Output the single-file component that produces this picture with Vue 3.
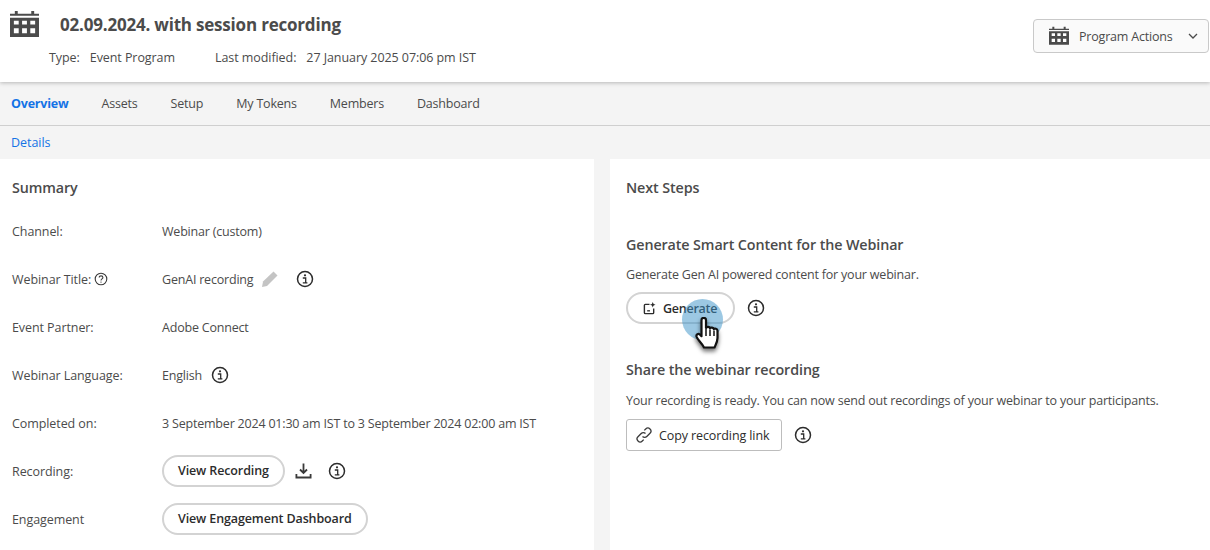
<script setup>
const summary = [
  { label: 'Channel:', value: 'Webinar (custom)' },
  { label: 'Webinar Title:', value: 'GenAI recording', help: true, edit: true, info: true },
  { label: 'Event Partner:', value: 'Adobe Connect' },
  { label: 'Webinar Language:', value: 'English', info: true },
  { label: 'Completed on:', value: '3 September 2024 01:30 am IST to 3 September 2024 02:00 am IST' },
  { label: 'Recording:', button: 'View Recording', download: true, info: true },
  { label: 'Engagement', button: 'View Engagement Dashboard' }
]
const tabs = ['Overview', 'Assets', 'Setup', 'My Tokens', 'Members', 'Dashboard']
</script>

<template>
  <div class="page">
    <header class="top">
      <div class="top-left">
        <div class="title-row">
          <svg class="cal-big" viewBox="0 0 30 30"><path d="M5 1h3v3H5zM22 1h3v3h-3zM0 4h30v2H0zM0 8h30v20H0z" fill="#4b4b4b"/><path d="M4 11h5v4H4zM12.500 11h5v4h-5zM21 11h5v4h-5zM4 19h5v5H4zM12.500 19h5v5h-5zM21 19h5v5h-5z" fill="#fff"/></svg>
          <h1>02.09.2024. with session recording</h1>
        </div>
        <div class="meta">
          <span>Type:</span><span class="meta-val">Event Program</span>
          <span class="meta-gap">Last modified:</span><span class="meta-val">27 January 2025 07:06 pm IST</span>
        </div>
      </div>
      <button class="actions">
        <svg class="cal-small" viewBox="0 0 30 30"><path d="M5 1h3v3H5zM22 1h3v3h-3zM0 4h30v2H0zM0 8h30v20H0z" fill="#4b4b4b"/><path d="M4 11h5v4H4zM12.500 11h5v4h-5zM21 11h5v4h-5zM4 19h5v5H4zM12.500 19h5v5h-5zM21 19h5v5h-5z" fill="#fff"/></svg>
        <span>Program Actions</span>
        <svg class="chev" viewBox="0 0 10 6"><path d="M1 1l4 4 4-4" fill="none" stroke="#4b4b4b" stroke-width="1.300"/></svg>
      </button>
    </header>

    <nav class="tabs">
      <span v-for="t in tabs" :key="t" :class="['tab', { active: t === 'Overview' }]">{{ t }}</span>
    </nav>
    <div class="subnav"><a>Details</a></div>

    <main class="panels">
      <section class="panel left">
        <h2>Summary</h2>
        <div class="row" v-for="r in summary" :key="r.label">
          <div class="label">
            {{ r.label }}
            <svg v-if="r.help" class="help" viewBox="0 0 14 14"><circle cx="7" cy="7" r="5.800" fill="none" stroke="#3a3a3a" stroke-width="1.100"/><path d="M5.200 5.600c0-2.400 3.700-2.300 3.700-.1 0 1.400-1.900 1.300-1.900 2.900" fill="none" stroke="#3a3a3a" stroke-width="1.100"/><circle cx="7" cy="10.100" r=".7" fill="#3a3a3a"/></svg>
          </div>
          <div class="value">
            <button v-if="r.button" class="pill">{{ r.button }}</button>
            <span v-else>{{ r.value }}</span>
            <svg v-if="r.edit" class="pencil" viewBox="0 0 16 16"><path d="M11.500 0.500l4 4L5 15l-5 1 1-5.500z" fill="#c4c4c4"/></svg>
            <svg v-if="r.download" class="download" viewBox="0 0 16 16"><path d="M8 0.500v9M4.500 6.500L8 10l3.500-3.500" fill="none" stroke="#3a3a3a" stroke-width="1.800"/><path d="M.9 11v3.500h14.200V11" fill="none" stroke="#3a3a3a" stroke-width="1.800"/></svg>
            <svg v-if="r.info" class="info" viewBox="0 0 18 18"><circle cx="9" cy="9" r="7.500" fill="none" stroke="#2c2c2c" stroke-width="1.500"/><circle cx="9" cy="5.300" r="1.100" fill="#2c2c2c"/><path d="M6.800 8h2.900v4.600M6.800 12.800h4.600" fill="none" stroke="#2c2c2c" stroke-width="1.300"/></svg>
          </div>
        </div>
      </section>

      <section class="panel right">
        <h2>Next Steps</h2>
        <h3 class="first">Generate Smart Content for the Webinar</h3>
        <p class="p-first">Generate Gen AI powered content for your webinar.</p>
        <div class="action-row gen-row">
          <button class="pill gen">
            <svg class="spark" viewBox="0 0 14 14"><path d="M7 2.500H2.500a1 1 0 0 0-1 1v8a1 1 0 0 0 1 1h8a1 1 0 0 0 1-1V7" fill="none" stroke="#2c2c2c" stroke-width="1.500"/><path d="M10.500 0l.9 2.100 2.100.9-2.100.9-.9 2.100-.9-2.100L7.500 3l2.100-.9z" fill="#2c2c2c"/><path d="M4.500 9.500h3" stroke="#2c2c2c" stroke-width="1.400"/></svg>
            Generate
          </button>
          <svg class="info" viewBox="0 0 18 18"><circle cx="9" cy="9" r="7.500" fill="none" stroke="#2c2c2c" stroke-width="1.500"/><circle cx="9" cy="5.300" r="1.100" fill="#2c2c2c"/><path d="M6.800 8h2.900v4.600M6.800 12.800h4.600" fill="none" stroke="#2c2c2c" stroke-width="1.300"/></svg>
        </div>
        <h3 class="second">Share the webinar recording</h3>
        <p class="p-second">Your recording is ready. You can now send out recordings of your webinar to your participants.</p>
        <div class="action-row copy-row">
          <button class="copy">
            <svg class="link" viewBox="0 0 18 18"><path d="M7.500 10.500a3 3 0 0 0 4.300 0l3.200-3.200a3 3 0 0 0-4.300-4.300L9.300 4.400" fill="none" stroke="#3a3a3a" stroke-width="1.300"/><path d="M10.500 7.500a3 3 0 0 0-4.300 0L3 10.700A3 3 0 0 0 7.300 15l1.400-1.400" fill="none" stroke="#3a3a3a" stroke-width="1.300"/></svg>
            Copy recording link
          </button>
          <svg class="info" viewBox="0 0 18 18"><circle cx="9" cy="9" r="7.500" fill="none" stroke="#2c2c2c" stroke-width="1.500"/><circle cx="9" cy="5.300" r="1.100" fill="#2c2c2c"/><path d="M6.800 8h2.900v4.600M6.800 12.800h4.600" fill="none" stroke="#2c2c2c" stroke-width="1.300"/></svg>
        </div>
      </section>
    </main>

    <!-- mouse highlight and pointer sit over the Generate button -->
    <div class="halo"></div>
    <svg class="hand" viewBox="0 0 28 35">
      <path d="M6.500 3c0-2.800 4.500-2.800 4.500 0v8c.6-1.500 3.600-1.500 4 .3.600-1.200 3.500-1 3.900.9.700-1 3.400-.6 3.600 1.400V21c0 3.500-1.500 6-3 9.500H9C7 26 2.500 23 1.500 19.500c-.5-2 1.800-3.200 3.300-2l1.700 1.700z" fill="#fff" stroke="#111" stroke-width="2.200" stroke-linejoin="round"/>
      <path d="M11 12v7M15 12.500v6.500M19 13.500v5.500" stroke="#111" stroke-width="1.500"/>
    </svg>
  </div>
</template>

<style>
html, body { background: #f4f4f4; }
body { overflow: hidden; }
</style>

<style scoped>
.page {
  position: relative;
  width: 1210px;
  height: 550px;
  overflow: hidden;
  background: #f4f4f4;
  color: #4b4b4b;
  font-family: "Open Sans", sans-serif;
  font-size: 12.5px;
  letter-spacing: -0.2px;
}
.top {
  position: relative;
  height: 82px;
  background: #fff;
  display: flex;
  justify-content: space-between;
  box-shadow: 0 1px 4px rgba(0, 0, 0, 0.25);
  box-sizing: border-box;
}
.top-left { padding: 9px 0 0 10px; }
.title-row { display: flex; align-items: center; height: 30px; }
.cal-big { width: 29px; height: 29px; margin-right: 21px; }
h1 { margin: 0; font-size: 17px; font-weight: 700; color: #4b4b4b; letter-spacing: -0.2px; }
.meta { display: flex; margin: 9px 0 0 39px; line-height: 20px; letter-spacing: -0.07px; }
.meta-val { margin-left: 10px; }
.meta-gap { margin-left: 40px; }
.actions {
  display: flex;
  align-items: center;
  width: 176px;
  height: 34px;
  margin: 19px 1px 0 0;
  padding: 0 0 0 15px;
  background: #fafafa;
  border: 1px solid #c9c9c9;
  border-radius: 4px;
  color: #4b4b4b;
  font: inherit;
  letter-spacing: -0.2px;
}
.cal-small { width: 20px; height: 20px; margin-right: 10px; }
.chev { width: 10px; height: 6px; margin-left: auto; margin-right: 10px; }
.tabs {
  display: flex;
  gap: 33px;
  padding: 0 0 1px 11px;
  align-items: center;
  border-bottom: 1px solid #cfcfcf;
  box-sizing: border-box;
  margin-top: 1px;
  height: 43px;
}
.tab.active { color: #1473e6; font-weight: 700; }
.subnav { height: 33px; padding-left: 11px; line-height: 34px; letter-spacing: -0.05px; }
.subnav a { color: #1473e6; }
.panels { display: flex; gap: 16px; height: 391px; }
.panel { background: #fff; box-sizing: border-box; }
.left { width: 594px; padding: 20px 0 0 12px; }
.right { flex: 1; padding: 20px 0 0 16px; }
h2 { margin: 0; font-size: 14.300px; font-weight: 600; line-height: 18px; color: #4b4b4b; letter-spacing: -0.1px; }
.row { display: flex; align-items: center; height: 48px; }
.row:first-of-type { margin-top: 10px; }
.label { width: 150px; display: flex; align-items: center; gap: 3px; color: #4b4b4b; letter-spacing: -0.08px; }
.value { display: flex; align-items: center; }
.pill {
  height: 32px;
  padding: 0 14px 2px;
  background: #fff;
  border: 2px solid #d3d3d3;
  border-radius: 16px;
  color: #2c2c2c;
  font: inherit;
  font-weight: 600;
  letter-spacing: -0.12px;
}
.help { width: 14px; height: 14px; }
.pencil { width: 16px; height: 16px; margin-left: 9px; }
.download { width: 17px; height: 16px; margin-left: 10px; }
.info { width: 18px; height: 18px; margin-left: 16px; }
.value span + .info { margin-left: 9px; }
.value .pencil + .info { margin-left: 18px; }
h3 { margin: 0; font-size: 14.300px; font-weight: 600; line-height: 18px; color: #4b4b4b; letter-spacing: -0.1px; }
h3.first { margin-top: 39px; }
h3.second { margin-top: 37px; }
p { margin: 0; line-height: 18px; color: #4b4b4b; }
.p-first { margin-top: 12px; }
.p-second { margin-top: 13px; }
.action-row { display: flex; align-items: center; }
.gen-row { margin-top: 8px; }
.copy-row { margin-top: 9px; }
.action-row .info { margin-left: 12px; }
.gen { display: flex; align-items: center; width: 109px; padding: 0 0 0 15px; letter-spacing: -0.25px; }
.spark { width: 13px; height: 13px; margin-right: 7px; }
.copy {
  display: flex;
  align-items: center;
  width: 156px;
  height: 32px;
  padding: 0 0 0 8px;
  background: #fff;
  border: 1px solid #bdbdbd;
  border-radius: 3px;
  color: #2c2c2c;
  font: inherit;
  letter-spacing: -0.1px;
}
.link { width: 18px; height: 18px; margin-right: 6px; }
.halo {
  position: absolute;
  left: 682px;
  top: 299px;
  width: 41px;
  height: 41px;
  border-radius: 50%;
  background: rgba(58, 145, 200, 0.5);
}
.hand {
  position: absolute;
  left: 695px;
  top: 317px;
  width: 28px;
  height: 35px;
  filter: drop-shadow(0 3px 2px rgba(0, 0, 0, 0.55));
}
</style>
